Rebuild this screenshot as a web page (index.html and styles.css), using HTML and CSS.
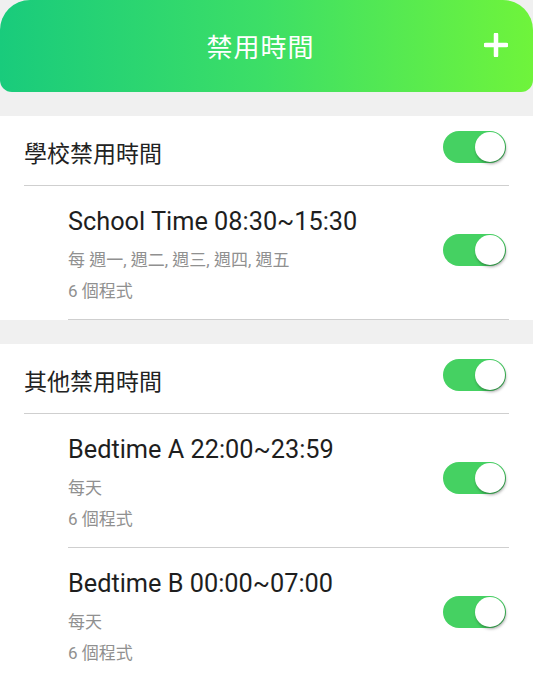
FILE: index.html
```html
<!DOCTYPE html>
<html lang="zh-Hant">
<head>
    <meta charset="UTF-8">
    <meta name="viewport" content="width=device-width, initial-scale=1.0">
    <title>禁用時間</title>
    <link rel="stylesheet" href="styles.css">
</head>
<body>

    <div class="top-bar">
        <h1>禁用時間</h1>
        <button class="add-btn" aria-label="新增">
            <svg width="24" height="24" viewBox="0 0 24 24">
                <path d="M12 1.5v21M1.5 12h21" stroke="#fff" stroke-width="4.5" stroke-linecap="round"/>
            </svg>
        </button>
    </div>

    <div class="section">
        <div class="group-row">
            <span class="group-title">學校禁用時間</span>
            <span class="switch"></span>
        </div>
        <div class="item">
            <div class="item-text">
                <div class="item-title">School Time 08:30~15:30</div>
                <div class="item-sub">每 週一, 週二, 週三, 週四, 週五</div>
                <div class="item-sub">6 個程式</div>
            </div>
            <span class="switch"></span>
        </div>
    </div>

    <div class="section">
        <div class="group-row">
            <span class="group-title">其他禁用時間</span>
            <span class="switch"></span>
        </div>
        <div class="item">
            <div class="item-text">
                <div class="item-title">Bedtime A 22:00~23:59</div>
                <div class="item-sub">每天</div>
                <div class="item-sub">6 個程式</div>
            </div>
            <span class="switch"></span>
        </div>
        <div class="item">
            <div class="item-text">
                <div class="item-title">Bedtime B 00:00~07:00</div>
                <div class="item-sub">每天</div>
                <div class="item-sub">6 個程式</div>
            </div>
            <span class="switch"></span>
        </div>
    </div>

</body>
</html>
```

FILE: styles.css
```css
body {
    margin: 0;
    padding: 0;
    background-color: #f0f0f0;
    font-family: Roboto, "Noto Sans CJK TC", sans-serif;
    color: #222;
}
.top-bar {
    height: 92px;
    display: flex;
    align-items: center;
    justify-content: center;
    position: relative;
    border-radius: 30px 30px 12px 12px;
    background: linear-gradient(90deg, #19cb7c 0%, #3ddf66 50%, #6ff43b 100%);
}
.top-bar h1 {
    margin: 0 12px 2px 0;
    font-size: 26px;
    font-weight: normal;
    color: #fff;
    letter-spacing: 1px;
}
.add-btn {
    position: absolute;
    right: 25px;
    top: 33px;
    width: 24px;
    height: 24px;
    padding: 0;
    border: none;
    background: none;
}
.add-btn svg {
    display: block;
}
.section {
    background-color: #fff;
    margin-top: 24px;
}
.group-row {
    height: 69px;
    margin: 0 24px;
    display: flex;
    align-items: center;
    justify-content: space-between;
    border-bottom: 1px solid #cfcfcf;
}
.group-title {
    font-size: 23px;
    padding-top: 2px;
}
.group-row .switch {
    margin-bottom: 8px;
}
.item {
    margin: 0 24px 0 68px;
    padding: 21px 0 12px 0;
    display: flex;
    align-items: center;
    justify-content: space-between;
    border-bottom: 1px solid #cfcfcf;
}
.item .switch {
    margin-bottom: 14px;
}
.item-title {
    font-size: 25.3px;
    line-height: 30px;
    margin-bottom: 8px;
    color: #1e1e1e;
}
.item-sub {
    font-size: 17px;
    line-height: 31px;
    color: #909090;
}
.switch {
    width: 63px;
    height: 32px;
    margin-right: 3px;
    border-radius: 16px;
    background-color: #45d162;
    position: relative;
    flex-shrink: 0;
}
.switch::after {
    content: "";
    position: absolute;
    right: 1px;
    top: 1px;
    width: 30px;
    height: 30px;
    border-radius: 50%;
    background-color: #fff;
    box-shadow: 1px 2px 3px rgba(0, 0, 0, 0.35);
}
```
